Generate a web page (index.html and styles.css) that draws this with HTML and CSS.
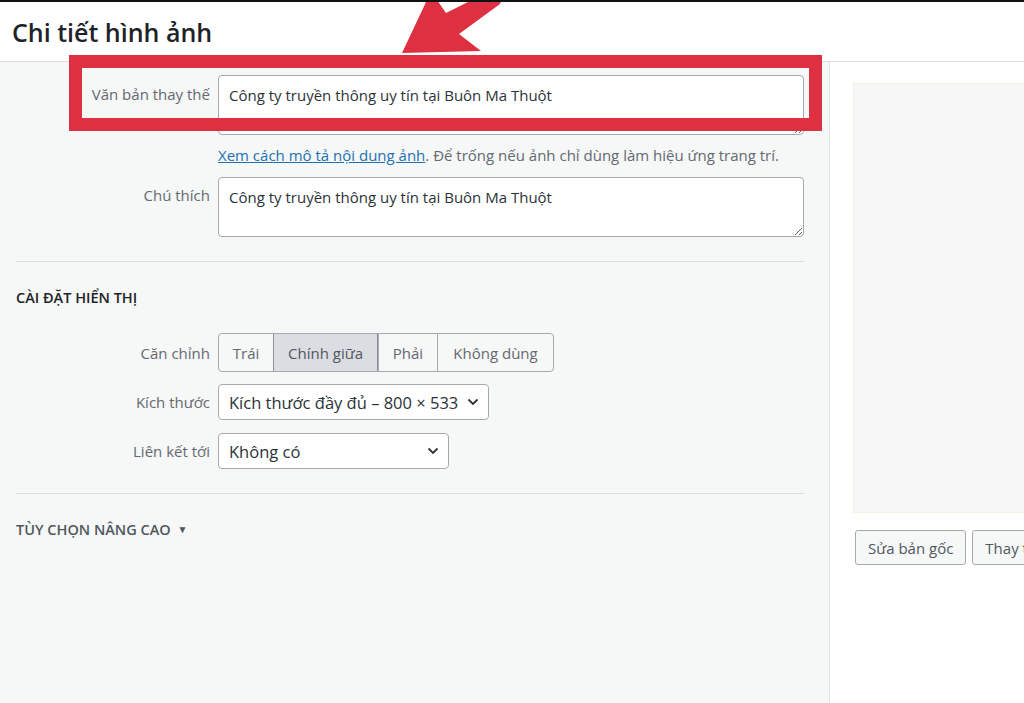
FILE: index.html
```html
<!DOCTYPE html>
<html lang="vi">
<head>
<meta charset="utf-8">
<title>Chi tiết hình ảnh</title>
<link rel="stylesheet" href="styles.css">
</head>
<body>
<div class="frame">
  <header class="head">
    <h1 class="title">Chi tiết hình ảnh</h1>
  </header>
  <div class="main">
    <section class="settings">
      <div class="row row-top">
        <label class="lbl">Văn bản thay thế</label>
        <div class="field">
          <textarea class="ta">Công ty truyền thông uy tín tại Buôn Ma Thuột</textarea>
          <p class="help"><a class="link" href="#">Xem cách mô tả nội dung ảnh</a>. Để trống nếu ảnh chỉ dùng làm hiệu ứng trang trí.</p>
        </div>
      </div>
      <div class="row row-top row-caption">
        <label class="lbl">Chú thích</label>
        <div class="field">
          <textarea class="ta">Công ty truyền thông uy tín tại Buôn Ma Thuột</textarea>
        </div>
      </div>
      <hr class="sep sep-first">
      <h2 class="sect">CÀI ĐẶT HIỂN THỊ</h2>
      <div class="row row-mid row-align">
        <label class="lbl">Căn chỉnh</label>
        <div class="group">
          <span class="gbtn b1">Trái</span>
          <span class="gbtn b2 active">Chính giữa</span>
          <span class="gbtn b3">Phải</span>
          <span class="gbtn b4">Không dùng</span>
        </div>
      </div>
      <div class="row row-mid row-size">
        <label class="lbl">Kích thước</label>
        <div class="sel sel-size"><span>Kích thước đầy đủ – 800 × 533</span>
          <svg class="chev" width="12" height="8" viewBox="0 0 12 8"><path d="M1.5 1.5 L6 6 L10.5 1.5" fill="none" stroke="#2c3338" stroke-width="1.8"/></svg>
        </div>
      </div>
      <div class="row row-mid row-link">
        <label class="lbl">Liên kết tới</label>
        <div class="sel sel-link"><span>Không có</span>
          <svg class="chev" width="12" height="8" viewBox="0 0 12 8"><path d="M1.5 1.5 L6 6 L10.5 1.5" fill="none" stroke="#2c3338" stroke-width="1.8"/></svg>
        </div>
      </div>
      <hr class="sep sep-second">
      <h2 class="sect sect-adv">TÙY CHỌN NÂNG CAO <span class="tri">▼</span></h2>
    </section>
    <aside class="preview">
      <div class="thumb"></div>
      <div class="actions">
        <span class="btn">Sửa bản gốc</span>
        <span class="btn">Thay thế</span>
      </div>
    </aside>
  </div>
  <div class="highlight"></div>
  <svg class="arrow" width="130" height="60" viewBox="395 0 130 60">
    <polygon points="402,53 427,0 437,0 446,13 476,-2 502,-2 500,4 459,34 481,51" fill="#dd3040"/>
  </svg>
</div>
</body>
</html>
```
FILE: styles.css
```css
html, body {
  margin: 0;
  padding: 0;
  background: #ffffff;
}
body {
  font-family: "Open Sans", "Noto Sans", sans-serif;
  color: #2c3338;
  overflow: hidden;
}
.frame {
  position: relative;
  width: 1024px;
  height: 703px;
  border-top: 2px solid #111;
  box-sizing: border-box;
  overflow: hidden;
}
.head {
  height: 59px;
  border-bottom: 1px solid #dcdcde;
  background: #fff;
  box-sizing: content-box;
}
.title {
  margin: 0;
  padding: 14px 0 0 12px;
  font-size: 25px;
  line-height: 32px;
  font-weight: 600;
  color: #1d2327;
}
.main {
  display: flex;
  height: 641px;
}
.settings {
  width: 830px;
  flex: none;
  box-sizing: border-box;
  background: #f6f7f7;
  border-right: 1px solid #e2e4e7;
  padding: 13px 26px 0 16px;
}
.row {
  display: grid;
  grid-template-columns: 194px 586px;
  column-gap: 8px;
}
.row-top { align-items: start; }
.row-mid { align-items: center; }
.lbl {
  text-align: right;
  font-size: 15px;
  line-height: 20px;
  color: #646970;
}
.row-top .lbl { padding-top: 9px; }
.row-caption { margin-top: 13px; }
.row-caption .lbl { padding-top: 8px; }
.field { display: flex; flex-direction: column; }
.ta {
  display: block;
  width: 586px;
  height: 60px;
  box-sizing: border-box;
  margin: 0;
  padding: 9px 10px;
  border: 1px solid #a7aaad;
  border-radius: 4px;
  background: #fff;
  font-family: "Open Sans", "Noto Sans", sans-serif;
  font-size: 15px;
  line-height: 21px;
  color: #2c3338;
  resize: vertical;
}
.help {
  margin: 11px 0 0;
  font-size: 15px;
  line-height: 18px;
  color: #646970;
}
.link {
  color: #2271b1;
  text-decoration: underline;
}
.sep {
  border: 0;
  border-top: 1px solid #dcdcde;
  margin: 24px 0 0;
  width: 788px;
}
.sect {
  margin: 28px 0 0;
  font-size: 14.5px;
  line-height: 16px;
  font-weight: 600;
  color: #1d2327;
}
.sect-adv {
  margin-top: 27px;
  color: #50575e;
}
.tri {
  font-size: 10px;
  margin-left: 3px;
  vertical-align: 2px;
}
.row-align { margin-top: 27px; }
.group {
  display: flex;
  width: max-content;
  height: 39px;
  border: 1px solid #a7aaad;
  border-radius: 4px;
  box-sizing: border-box;
  overflow: hidden;
  background: #f6f7f7;
}
.gbtn {
  display: flex;
  align-items: center;
  justify-content: center;
  font-size: 15px;
  color: #646970;
  border-left: 1px solid #a7aaad;
  box-sizing: border-box;
}
.b1 { border-left: 0; width: 54px; }
.b2 { width: 105px; }
.b3 { width: 59px; }
.b4 { width: 116px; }
.gbtn.active {
  background: #dcdde3;
  border-left-color: #8c8f94;
  border-right: 1px solid #8c8f94;
  color: #50575e;
}
.row-size { margin-top: 12px; }
.row-link { margin-top: 13px; }
.sel {
  display: flex;
  align-items: center;
  justify-content: space-between;
  height: 36px;
  box-sizing: border-box;
  border: 1px solid #a7aaad;
  border-radius: 4px;
  background: #fff;
  padding: 0 9px 0 10px;
  font-size: 16.5px;
  color: #2c3338;
}
.sel-size { width: 271px; }
.sel-link { width: 231px; }
.chev { flex: none; }
.sep-second { margin-top: 24px; }
.preview {
  flex: 1;
  padding: 21px 0 0 23px;
  background: #fff;
  overflow: hidden;
}
.thumb {
  width: 300px;
  height: 430px;
  box-sizing: border-box;
  background: #f7f7f7;
  border: 1px solid #f6efe2;
}
.actions {
  display: flex;
  gap: 6px;
  margin-top: 17px;
  padding-left: 2px;
  white-space: nowrap;
}
.btn {
  display: inline-flex;
  align-items: center;
  height: 35px;
  box-sizing: border-box;
  padding: 0 12px;
  border: 1px solid #a7aaad;
  border-radius: 3px;
  background: #f6f7f7;
  font-size: 15px;
  color: #50575e;
}
.highlight {
  position: absolute;
  left: 69px;
  top: 53px;
  width: 753px;
  height: 76px;
  box-sizing: border-box;
  border: 13px solid #dd3040;
}
.arrow {
  position: absolute;
  left: 395px;
  top: -2px;
}
```
